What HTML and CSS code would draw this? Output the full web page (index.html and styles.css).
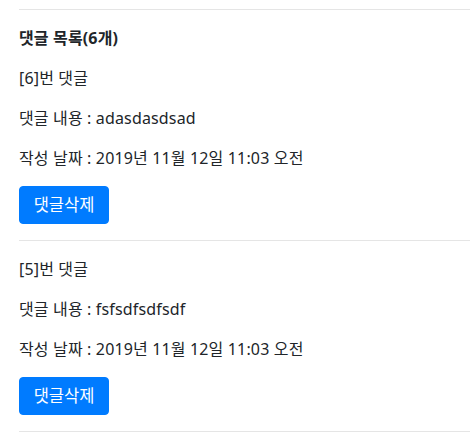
FILE: index.html
```html
<!DOCTYPE html>
<html lang="ko">
<head>
<meta charset="utf-8">
<link rel="stylesheet" href="styles.css">
</head>
<body>
<div class="comments">
  <hr class="divider">
  <p class="title">댓글 목록(6개)</p>
  <div class="comment">
    <p>[6]번 댓글</p>
    <p>댓글 내용 : adasdasdsad</p>
    <p>작성 날짜 : 2019년 11월 12일 11:03 오전</p>
    <button class="btn">댓글삭제</button>
  </div>
  <hr class="divider">
  <div class="comment">
    <p>[5]번 댓글</p>
    <p>댓글 내용 : fsfsdfsdfsdf</p>
    <p>작성 날짜 : 2019년 11월 12일 11:03 오전</p>
    <button class="btn">댓글삭제</button>
  </div>
  <hr class="divider">
</div>
</body>
</html>
```
FILE: styles.css
```css
html, body {
  margin: 0;
  padding: 0;
  background: #fff;
}
body {
  font-family: "Noto Sans", "Noto Sans CJK KR", sans-serif;
  font-size: 16px;
  line-height: 24px;
  color: #212529;
  overflow: hidden;
}
.comments {
  padding: 9px 0 0 19px;
}
.divider {
  margin: 0 0 16px 0;
  border: 0;
  border-top: 1px solid #e5e5e5;
  height: 0;
}
p {
  margin: 0 0 16px 0;
  letter-spacing: 0.15px;
}
.title {
  font-weight: 700;
}
.comment {
  margin-bottom: 16px;
}
.btn {
  display: block;
  font: inherit;
  font-size: 16.5px;
  color: #fff;
  background: #007bff;
  border: 1px solid #007bff;
  border-radius: 4px;
  padding: 6px 12px;
  line-height: 24px;
  height: 38px;
  width: 90px;
  cursor: pointer;
}
```
